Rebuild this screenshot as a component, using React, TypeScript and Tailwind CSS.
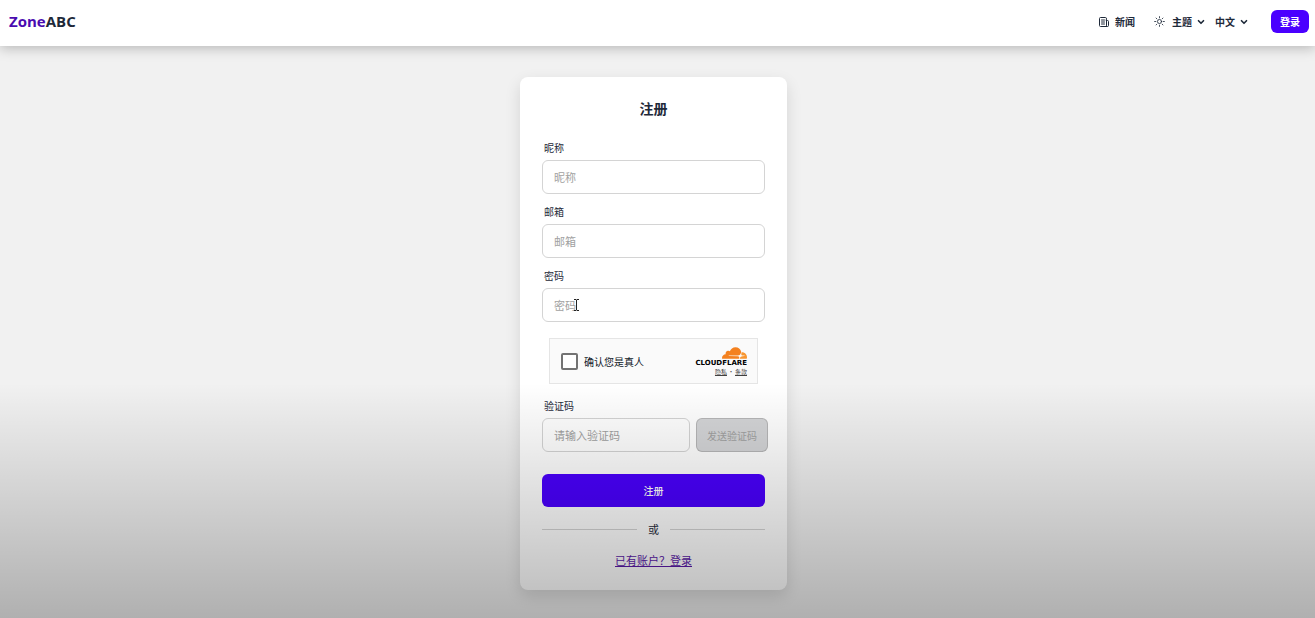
import React from 'react';
import { HiOutlineSun } from 'react-icons/hi2';
import { ChevronDown } from 'lucide-react';

const inputClass =
  'h-[34px] w-full min-w-0 rounded-md border border-neutral-300 bg-white px-[11px] text-[11px] text-gray-800 placeholder:text-neutral-400 outline-none focus:border-neutral-400';

const Field = ({ id, label, type = 'text', children }: { id: string; label: string; type?: string; children?: React.ReactNode }) => {
  return (
    <div className="relative flex flex-col">
      <label htmlFor={id} className="flex h-[30px] items-center pt-1 pl-[2px] text-[10px] text-gray-800">
        {label}
      </label>
      <input id={id} type={type} placeholder={label} className={inputClass} />
      {children}
    </div>
  );
};

const NavSelect = ({ label, options }: { label: string; options: string[] }) => {
  return (
    <div className="relative flex items-center">
      <select
        aria-label={label}
        className="w-[34px] cursor-pointer appearance-none bg-transparent text-[10px] font-bold text-gray-800 outline-none"
      >
        {options.map((option) => (
          <option key={option}>{option}</option>
        ))}
      </select>
      <ChevronDown size={10} strokeWidth={4} className="pointer-events-none absolute right-0 text-gray-800" />
    </div>
  );
};

const NewsIcon = () => (
  <svg viewBox="0 0 12 12" className="h-3 w-3" fill="none" stroke="currentColor" strokeLinejoin="round" strokeLinecap="round" aria-hidden="true">
    <path d="M8.5 2.5a1 1 0 0 0-1-1h-5a1 1 0 0 0-1 1v7a1 1 0 0 0 1 1h7a1 1 0 0 0 1-1v-4a1 1 0 0 0-1-1h-1zM8.5 4.5v5M3.5 4h3M3.5 6h3M3.5 8h3" />
  </svg>
);

const CloudflareLogo = () => (
  <svg viewBox="0 6.5 24 11" className="h-3 w-[25px]" aria-hidden="true">
    <path
      fill="#f4811f"
      d="M16.5088 16.8447c.1475-.5068.0908-.9707-.1553-1.3154-.2246-.3164-.6045-.499-1.0615-.5205l-8.6592-.1123a.1559.1559 0 0 1-.1333-.0713c-.0283-.042-.0351-.0986-.021-.1553.0278-.084.1123-.1484.2036-.1562l8.7359-.1123c1.0351-.0489 2.1601-.8868 2.5537-1.9136l.499-1.3013c.0215-.0561.0293-.1128.0147-.168-.5625-2.5463-2.835-4.4453-5.5499-4.4453-2.5039 0-4.6284 1.6177-5.3876 3.8614-.4927-.3658-1.1187-.5625-1.794-.499-1.2026.119-2.1665 1.083-2.2861 2.2856-.0283.31-.0069.6128.0635.894C1.5683 13.171 0 14.7754 0 16.752c0 .1748.0142.3515.0352.5273.0141.083.0844.1475.1689.1475h15.9814c.0909 0 .1758-.0645.2032-.1553l.12-.4268z"
    />
    <path
      fill="#f8952f"
      d="M19.2656 11.2813c-.0771 0-.1611 0-.2383.0112-.0566 0-.1054.0415-.127.0976l-.3378 1.1744c-.1475.5068-.0918.9707.1543 1.3164.2256.3164.6055.498 1.0625.5195l1.8437.1133c.0557 0 .1055.0263.1329.0703.0283.043.0351.1074.0214.1562-.0283.084-.1132.1485-.204.1553l-1.921.1123c-1.041.0488-2.1582.8867-2.5527 1.914l-.1406.3585c-.0283.0713.0215.1416.0986.1416h6.5977c.0771 0 .1474-.0489.169-.126.1122-.4082.1757-.837.1757-1.2803 0-2.6025-2.125-4.727-4.7344-4.727"
    />
  </svg>
);

const Turnstile = () => (
  <div className="mx-[7px] mt-4 flex h-[46px] items-center justify-between border border-neutral-200 bg-[#fafafa] pr-[10px] pl-[11px]">
    <label className="flex items-center gap-[6px] text-[10px] text-gray-900">
      <input
        type="checkbox"
        className="h-[17px] w-[17px] appearance-none rounded-xs border-2 border-neutral-500 bg-white checked:bg-neutral-500"
      />
      确认您是真人
    </label>
    <div className="flex flex-col items-end">
      <CloudflareLogo />
      <span className="font-['DejaVu_Sans'] text-[7px] leading-[8px] font-bold text-black">CLOUDFLARE</span>
      <div className="flex gap-px text-[6px] leading-[9px] text-neutral-700">
        <a href="#privacy" className="underline">隐私</a>
        <span>•</span>
        <a href="#terms" className="underline">条款</a>
      </div>
    </div>
  </div>
);

const Header = () => (
  <header className="relative flex h-[46px] items-center justify-between bg-white pr-[6px] pb-[3px] pl-[9px] shadow-[0_2px_12px_rgba(0,0,0,0.25)]">
    <a href="/" className="font-['Open_Sans',sans-serif] text-[15px] font-bold text-gray-800">
      <span className="text-[#4a0bb0]">Zone</span>ABC
    </a>
    <nav className="flex items-center text-[10px] font-bold text-gray-800">
      <a href="/news" className="mr-[18px] flex items-center gap-[5px]">
        <NewsIcon />
        新闻
      </a>
      <div className="mr-[9px] flex items-center gap-[6px]">
        <HiOutlineSun size={13} />
        <NavSelect label="主题" options={['主题', '浅色', '深色']} />
      </div>
      <NavSelect label="语言" options={['中文', 'EN']} />
      <a href="/login" className="ml-[22px] flex h-[23px] items-center rounded-md bg-[#4a00ff] px-[9px] text-white">
        登录
      </a>
    </nav>
  </header>
);

export default function App() {
  return (
    <div className="relative flex min-h-screen flex-col bg-[#f1f1f1] font-['Noto_Sans_CJK_SC',sans-serif]">
      <Header />

      <main className="flex flex-grow items-start justify-center pt-[31px] pr-2 pb-7">
        <form
          className="flex w-full max-w-[267px] flex-col rounded-lg bg-white px-[22px] pt-5 pb-5 shadow-[0_6px_16px_rgba(0,0,0,0.12)]"
          onSubmit={(e) => e.preventDefault()}
        >
          <h1 className="mb-[11px] text-center text-[14px] leading-[22px] font-bold text-gray-800">注册</h1>

          <Field id="nickname" label="昵称" />
          <Field id="email" label="邮箱" type="email" />
          <Field id="password" label="密码" type="password">
            {/* text cursor */}
            <svg viewBox="0 0 7 12" className="pointer-events-none absolute bottom-[11px] left-[31px] h-3 w-[7px]" aria-hidden="true">
              <path d="M1 .5h2l.5.5.5-.5h2M3.5 1v10M1 11.5h2l.5-.5.5.5h2" fill="none" stroke="#222" />
            </svg>
          </Field>

          <Turnstile />

          <div className="mt-1 flex flex-col">
            <label htmlFor="code" className="flex h-[30px] items-center pt-1 pl-[2px] text-[10px] text-gray-800">
              验证码
            </label>
            <div className="-mr-[3px] flex gap-[6px]">
              <input id="code" placeholder="请输入验证码" className={inputClass} />
              <button
                type="button"
                disabled
                className="h-[34px] flex-shrink-0 rounded-md border border-neutral-400/60 bg-[#d4d5d7] px-[10px] text-[10px] text-neutral-400"
              >
                发送验证码
              </button>
            </div>
          </div>

          <button type="submit" className="mt-[22px] h-[33px] rounded-md bg-[#4a00ff] text-[10px] font-medium text-white">
            注册
          </button>

          <div className="mt-3 flex items-center gap-[11px] text-[11px] leading-[20px] text-gray-800">
            <span className="h-px flex-grow bg-neutral-300" />
            或
            <span className="h-px flex-grow bg-neutral-300" />
          </div>

          <a href="/login" className="mt-[11px] self-center text-[11px] leading-[20px] text-[#5b1aa8] underline">
            已有账户？登录
          </a>
        </form>
      </main>

      {/* bottom shade */}
      <div className="pointer-events-none absolute inset-x-0 bottom-0 h-[38%] bg-linear-to-b from-black/0 to-black/27" />
    </div>
  );
}
